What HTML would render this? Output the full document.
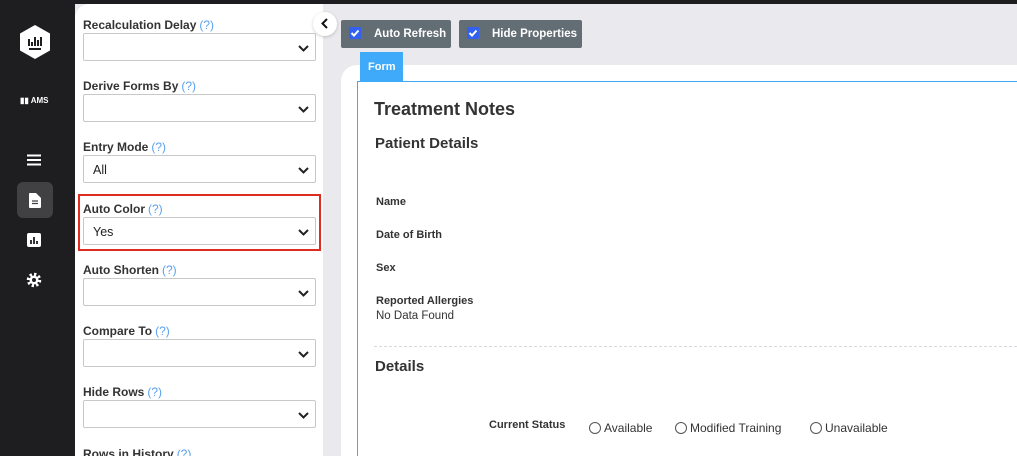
<!DOCTYPE html>
<html><head><style>
*{box-sizing:border-box;margin:0;padding:0}
html,body{width:1017px;height:456px;overflow:hidden}
body{background:#e9e9ee;font-family:"Liberation Sans",Arial,sans-serif;position:relative;color:#333}
.top{position:absolute;left:0;top:0;width:1017px;height:4px;background:#1d1d1f}
.side{position:absolute;left:0;top:0;width:75px;height:456px;background:#1e1e20}
.panel{position:absolute;left:75px;top:4px;width:248px;height:452px;background:#fff;border-top-left-radius:14px;overflow:hidden}
.f{position:absolute;left:8px;width:233px}
.f label{display:block;font-size:12px;font-weight:bold;color:#333;height:16px;padding-top:1px}
.f label span{color:#5aa1f0;font-weight:normal;margin-left:3px}
.sel{height:28px;border:1px solid #c8c8c8;border-radius:2px;font-size:12.5px;padding:7px 0 0 9px;position:relative;color:#222}
.sel svg{position:absolute;right:6px;top:11px}
.red{position:absolute;left:78px;top:194px;width:243px;height:57px;border:2px solid #e02b20}
.btn{position:absolute;top:20px;height:28px;background:#636d74;border-radius:2px;color:#fff;font-size:11.5px;font-weight:bold;padding-top:8px}
.cb{position:absolute;left:8px;top:7px;width:12px;height:12px;background:#3260f0;border-radius:1px}
.card{position:absolute;left:341px;top:65px;width:690px;height:400px;background:#fff;border-top-left-radius:16px}
.tab{position:absolute;left:360px;top:52px;width:43px;height:30px;background:#3fa9fa;color:#fff;font-size:11px;font-weight:bold;padding:9px 0 0 8px}
.inner{position:absolute;left:357px;top:81px;width:670px;height:380px;border:1px solid #3fa9fa;border-right:none;border-bottom:none}
.t{position:absolute;color:#333}
.circ{display:inline-block;width:12px;height:12px;border:1px solid #555;border-radius:50%;vertical-align:-2px;margin-right:3px}
</style></head><body>
<div class="top"></div>
<div class="side">
 <svg style="position:absolute;left:18px;top:24px" width="34" height="36" viewBox="0 0 34 36"><polygon points="17,1 32,9.5 32,26.5 17,35 2,26.5 2,9.5" fill="#fff"/><path d="M11 25h12M11 22v-7M14 22v-4M17 22v-9M20 22v-6M23 22v-9" stroke="#1e1e20" stroke-width="2"/></svg>
 <div style="position:absolute;left:20px;top:96px;color:#fff;font-size:8px;font-weight:bold">▮▮ AMS</div>
 <svg style="position:absolute;left:27px;top:154px" width="14" height="12"><path d="M0 1.5h14M0 6h14M0 10.5h14" stroke="#fff" stroke-width="2"/></svg>
 <div style="position:absolute;left:17px;top:182px;width:36px;height:36px;background:#414143;border-radius:6px"></div>
 <svg style="position:absolute;left:29px;top:193px" width="12" height="15"><path d="M0 1a1 1 0 011-1h6l5 5v9a1 1 0 01-1 1H1a1 1 0 01-1-1z" fill="#fff"/><path d="M3 8h6M3 10.5h6" stroke="#414143" stroke-width="1.2"/></svg>
 <svg style="position:absolute;left:27px;top:233px" width="14" height="14"><rect width="14" height="14" rx="2" fill="#fff"/><path d="M4 11V7M7 11V4M10 11V8" stroke="#1e1e20" stroke-width="1.8"/></svg>
 <svg style="position:absolute;left:26px;top:272px" width="16" height="16" viewBox="0 0 16 16"><circle cx="8" cy="8" r="5.5" fill="none" stroke="#fff" stroke-width="3.5" stroke-dasharray="2.2 2.1"/><circle cx="8" cy="8" r="4.5" fill="#fff"/><circle cx="8" cy="8" r="2" fill="#1e1e20"/></svg>
</div>
<div class="panel">
 <div class="f" style="top:13px"><label>Recalculation Delay<span>(?)</span></label><div class="sel"><svg width="11" height="7"><path d="M1 1l4.5 4.5L10 1" stroke="#222" stroke-width="2" fill="none"/></svg></div></div>
 <div class="f" style="top:74px"><label>Derive Forms By<span>(?)</span></label><div class="sel"><svg width="11" height="7"><path d="M1 1l4.5 4.5L10 1" stroke="#222" stroke-width="2" fill="none"/></svg></div></div>
 <div class="f" style="top:135px"><label>Entry Mode<span>(?)</span></label><div class="sel">All<svg width="11" height="7"><path d="M1 1l4.5 4.5L10 1" stroke="#222" stroke-width="2" fill="none"/></svg></div></div>
 <div class="f" style="top:197px"><label>Auto Color<span>(?)</span></label><div class="sel">Yes<svg width="11" height="7"><path d="M1 1l4.5 4.5L10 1" stroke="#222" stroke-width="2" fill="none"/></svg></div></div>
 <div class="f" style="top:258px"><label>Auto Shorten<span>(?)</span></label><div class="sel"><svg width="11" height="7"><path d="M1 1l4.5 4.5L10 1" stroke="#222" stroke-width="2" fill="none"/></svg></div></div>
 <div class="f" style="top:319px"><label>Compare To<span>(?)</span></label><div class="sel"><svg width="11" height="7"><path d="M1 1l4.5 4.5L10 1" stroke="#222" stroke-width="2" fill="none"/></svg></div></div>
 <div class="f" style="top:380px"><label>Hide Rows<span>(?)</span></label><div class="sel"><svg width="11" height="7"><path d="M1 1l4.5 4.5L10 1" stroke="#222" stroke-width="2" fill="none"/></svg></div></div>
 <div class="f" style="top:442px"><label>Rows in History<span>(?)</span></label></div>
</div>
<div class="red"></div>
<div style="position:absolute;left:313px;top:12px;width:24px;height:24px;border-radius:50%;background:#fff;box-shadow:0 1px 3px rgba(0,0,0,.2)"><svg style="position:absolute;left:8px;top:6px" width="7" height="11"><path d="M6 1L1.5 5.5 6 10" stroke="#111" stroke-width="2" fill="none"/></svg></div>
<div class="btn" style="left:341px;width:110px;padding-left:33px"><div class="cb"><svg width="12" height="12"><path d="M2.5 6l2.5 2.5 4.5-5" stroke="#fff" stroke-width="2" fill="none"/></svg></div>Auto Refresh</div>
<div class="btn" style="left:459px;width:123px;padding-left:33px"><div class="cb"><svg width="12" height="12"><path d="M2.5 6l2.5 2.5 4.5-5" stroke="#fff" stroke-width="2" fill="none"/></svg></div>Hide Properties</div>
<div class="card"></div>
<div class="inner"></div>
<div class="tab">Form</div>
<div class="t" style="left:374px;top:99px;font-size:18px;font-weight:bold">Treatment Notes</div>
<div class="t" style="left:375px;top:135px;font-size:15px;font-weight:bold">Patient Details</div>
<div class="t" style="left:376px;top:196px;font-size:11px;font-weight:bold">Name</div>
<div class="t" style="left:376px;top:229px;font-size:11px;font-weight:bold">Date of Birth</div>
<div class="t" style="left:376px;top:262px;font-size:11px;font-weight:bold">Sex</div>
<div class="t" style="left:376px;top:295px;font-size:11px;font-weight:bold">Reported Allergies</div>
<div class="t" style="left:376px;top:310px;font-size:11.5px">No Data Found</div>
<div style="position:absolute;left:374px;top:346px;width:643px;border-top:1px dashed #d8d8e0"></div>
<div class="t" style="left:375px;top:358px;font-size:15px;font-weight:bold">Details</div>
<div class="t" style="left:489px;top:419px;font-size:11px;font-weight:bold">Current Status</div>
<div class="t" style="left:589px;top:421px;font-size:12px"><span class="circ"></span>Available</div>
<div class="t" style="left:675px;top:421px;font-size:12px"><span class="circ"></span>Modified Training</div>
<div class="t" style="left:810px;top:421px;font-size:12px"><span class="circ"></span>Unavailable</div>
</body></html>
